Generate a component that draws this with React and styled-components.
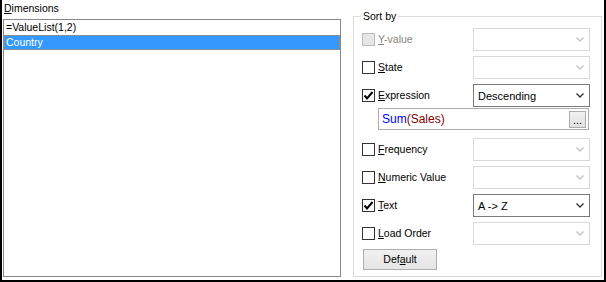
import React from 'react';
import styled, { createGlobalStyle } from 'styled-components';

const GlobalStyle = createGlobalStyle`
    body {
        margin: 0;
        background: white;
        font-family: "Liberation Sans", Arial, sans-serif;
        font-size: 10.5px;
        color: #000;
    }
`

const Frame = styled.div`
    width: 606px;
    height: 282px;
    box-sizing: border-box;
    border: 2px solid #000;
    border-top: none;
    display: flex;
    background: white;
`

const DimensionsPane = styled.div`
    width: 338px;
    margin-left: 1px;
    display: flex;
    flex-direction: column;
`

const PaneLabel = styled.div`
    margin-top: 2px;
    padding-left: 1px;
    line-height: 13px;
    height: 13px;
`

const ListBox = styled.div`
    margin-top: 4px;
    margin-bottom: 3px;
    flex: 1;
    border: 1px solid #828790;
    display: flex;
    flex-direction: column;
`

const ListItem = styled.div`
    height: 15px;
    line-height: 15px;
    padding-left: 1px;
    box-sizing: border-box;
    background: ${p => p.$selected ? '#3399ff' : 'transparent'};
    color: ${p => p.$selected ? '#fff' : '#000'};
    border: 1px dotted ${p => p.$selected ? '#d08a3c' : 'transparent'};
    line-height: 13px;
`

const GroupBox = styled.div`
    position: relative;
    width: 249px;
    margin: 16px 0 3px 12px;
    border: 1px solid #dcdcdc;
    box-sizing: border-box;
    padding: 11px 11px 0 8px;
    display: flex;
    flex-direction: column;
`

const Legend = styled.span`
    position: absolute;
    top: -7px;
    left: 7px;
    padding: 0 2px;
    background: white;
    line-height: 13px;
`

const SortRow = styled.div`
    display: grid;
    grid-template-columns: 111px 117px;
    height: 23px;
    align-items: center;
    margin-top: ${p => p.$gap ?? 5}px;
    &:first-of-type { margin-top: 0; }
`

const CheckLabel = styled.label`
    display: flex;
    align-items: center;
    gap: 3px;
    color: ${p => p.$disabled ? '#838383' : '#000'};
    line-height: 13px;
`

const Box = styled.span`
    width: 13px;
    height: 13px;
    box-sizing: border-box;
    border: 1px solid ${p => p.$disabled ? '#bcbcbc' : '#333'};
    background: ${p => p.$disabled ? '#e6e6e6' : '#fff'};
    display: flex;
    align-items: center;
    justify-content: center;
`

const Combo = styled.div`
    height: 23px;
    box-sizing: border-box;
    border: 1px solid ${p => p.$disabled ? '#d9d9d9' : '#7a7a7a'};
    background: #fff;
    display: flex;
    align-items: center;
    justify-content: space-between;
    padding: 0 5px 0 4px;
    font-size: 11px;
`

const ExpressionBox = styled.div`
    width: 211px;
    height: 22px;
    margin: 1px 0 0 16px;
    box-sizing: border-box;
    border: 1px solid #abadb3;
    display: flex;
    align-items: center;
    justify-content: space-between;
    padding: 0 2px 0 3px;
    font-size: 12px;
`

const Fn = styled.span`
    color: #0000ff;
`

const Arg = styled.span`
    color: #800000;
`

const EllipsisButton = styled.div`
    width: 17px;
    height: 17px;
    box-sizing: border-box;
    border: 1px solid #adadad;
    background: linear-gradient(#f2f2f2, #e1e1e1);
    font-size: 11px;
    line-height: 17px;
    text-align: center;
`

const DefaultButton = styled.div`
    width: 74px;
    height: 21px;
    margin: 4px 0 0 1px;
    box-sizing: border-box;
    border: 1px solid #adadad;
    background: linear-gradient(#f0f0f0, #e5e5e5);
    display: flex;
    align-items: center;
    justify-content: center;
    line-height: 13px;
`

const Chevron = ({ disabled }) => (
    <svg width="8" height="5" viewBox="0 0 8 5">
        <polyline points="0.5,0.5 4,4 7.5,0.5" fill="none"
            stroke={disabled ? '#c4c4c4' : '#333'} strokeWidth="1.4" />
    </svg>
)

const Tick = () => (
    <svg width="11" height="11" viewBox="0 0 11 11">
        <polyline points="1.5,5.5 4,8.5 9.5,2" fill="none" stroke="#000" strokeWidth="2" />
    </svg>
)

const rows = [
    { key: 'Y', rest: '-value', disabled: true },
    { key: 'S', rest: 'tate' },
    { key: 'E', rest: 'xpression', checked: true, value: 'Descending' },
    { key: 'F', rest: 'requency', gap: 8 },
    { key: 'N', rest: 'umeric Value' },
    { key: 'T', rest: 'ext', checked: true, value: 'A -> Z' },
    { key: 'L', rest: 'oad Order' },
]

const SortOption = ({ row }) => (
    <SortRow $gap={row.gap}>
        <CheckLabel $disabled={row.disabled}>
            <Box $disabled={row.disabled}>{row.checked && <Tick />}</Box>
            <span><u>{row.key}</u>{row.rest}</span>
        </CheckLabel>
        <Combo $disabled={!row.value}>
            <span>{row.value}</span>
            <Chevron disabled={!row.value} />
        </Combo>
    </SortRow>
)

export default function App() {
    return (
        <>
            <GlobalStyle />
            <Frame>
                <DimensionsPane>
                    <PaneLabel><u>D</u>imensions</PaneLabel>
                    <ListBox>
                        <ListItem>=ValueList(1,2)</ListItem>
                        <ListItem $selected>Country</ListItem>
                    </ListBox>
                </DimensionsPane>
                <GroupBox>
                    <Legend>Sort by</Legend>
                    {rows.slice(0, 3).map(r => <SortOption key={r.key} row={r} />)}
                    <ExpressionBox>
                        <span><Fn>Sum</Fn><Arg>(Sales)</Arg></span>
                        <EllipsisButton>...</EllipsisButton>
                    </ExpressionBox>
                    {rows.slice(3).map(r => <SortOption key={r.key} row={r} />)}
                    <DefaultButton>Def<u>a</u>ult</DefaultButton>
                </GroupBox>
            </Frame>
        </>
    );
}
